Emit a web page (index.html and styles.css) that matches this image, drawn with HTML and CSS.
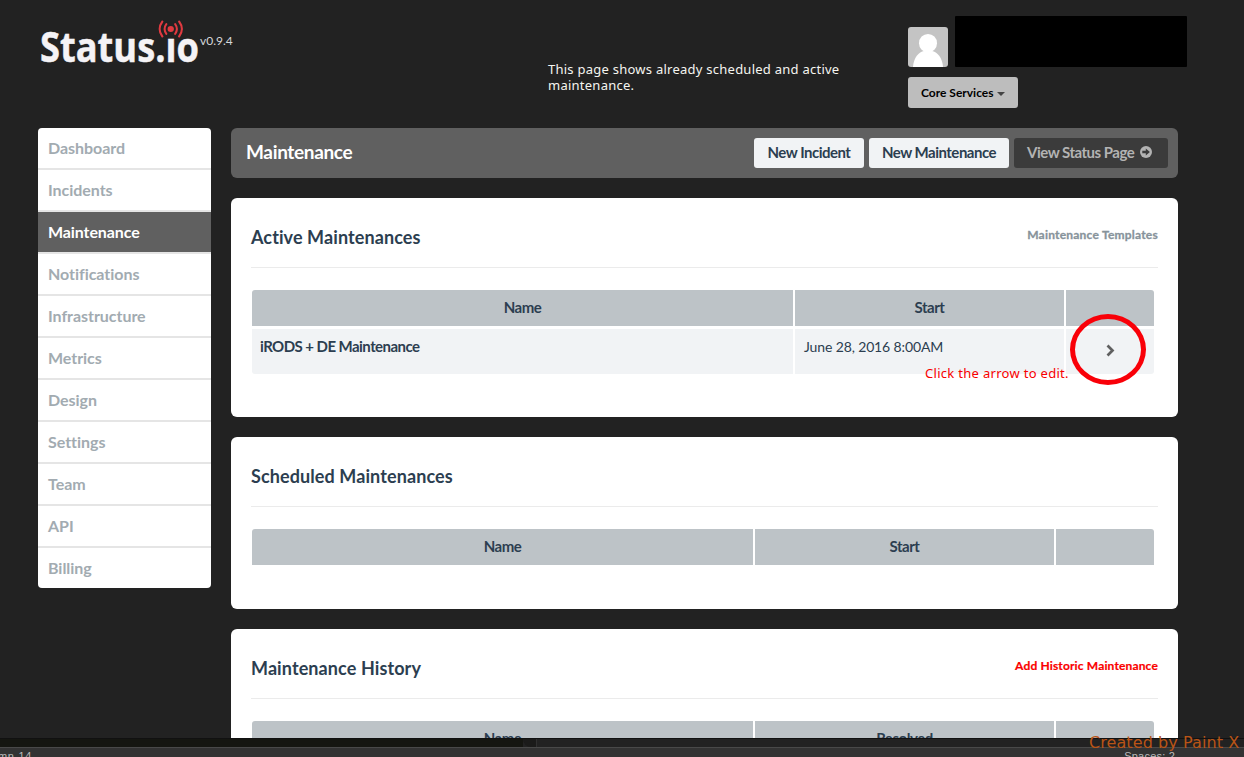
FILE: index.html
```html
<!DOCTYPE html>
<html lang="en">
<head>
<meta charset="utf-8">
<title>Status.io - Maintenance</title>
<link rel="stylesheet" href="styles.css">
</head>
<body>
<div class="screen">
  <header class="top">
    <div class="brand">
      <span class="logo">Status.<span class="logo-i">&#305;<svg class="signal" viewBox="0 0 26 18" preserveAspectRatio="none" fill="none" stroke="#e03a40" stroke-width="2.100" stroke-linecap="round"><ellipse cx="13" cy="9" rx="3.300" ry="2.900" fill="#e03a40" stroke="none"/><path d="M8.400 4.200Q4.800 9 8.400 13.800M17.600 4.200Q21.200 9 17.600 13.800M4.300 1.500Q-1.500 9 4.300 16.500M21.700 1.500Q27.500 9 21.700 16.500"/></svg></span>o</span>
      <span class="version">v0.9.4</span>
    </div>
    <p class="caption">This page shows already scheduled and active<br>maintenance.</p>
    <div class="account">
      <div class="user">
        <svg class="avatar" viewBox="0 0 40 40"><rect width="40" height="40" fill="#c4c4c4"/><ellipse cx="20" cy="16.2" rx="9" ry="9.3" fill="#fff"/><path d="M5 40C5.5 31 11 24.5 16 24h8c5 .5 10.500 7 11 16z" fill="#fff"/></svg>
        <div class="redacted"></div>
      </div>
      <button class="services"><span class="services-label">Core Services</span><span class="caret"></span></button>
    </div>
  </header>

  <div class="body">
    <nav class="menu">
      <a>Dashboard</a><a>Incidents</a><a class="current">Maintenance</a><a>Notifications</a><a>Infrastructure</a><a>Metrics</a><a>Design</a><a>Settings</a><a>Team</a><a>API</a><a>Billing</a>
    </nav>
    <main class="content">
      <div class="titlebar">
        <h1>Maintenance</h1>
        <button class="btn incident">New Incident</button>
        <button class="btn maint">New Maintenance</button>
        <button class="btn view"><span>View Status Page</span><svg class="go" viewBox="0 0 12 12"><circle cx="6" cy="6" r="6" fill="#b3b3b3"/><path d="M2.300 4.700h3.500V2.500L9.900 6 5.800 9.500V7.300H2.300z" fill="#3b3b3b"/></svg></button>
      </div>

      <section class="card active">
        <div class="card-head"><h2 class="h-active">Active Maintenances</h2><a class="templates">Maintenance Templates</a></div>
        <div class="grid grid-active">
          <div class="th">Name</div><div class="th">Start</div><div class="th"></div>
          <div class="td name">iRODS + DE Maintenance</div><div class="td date">June 28, 2016 8:00AM<span class="note">Click the arrow to edit.</span></div>
          <div class="td action"><svg class="chevron" viewBox="0 0 9 13"><path d="M1.500 1.500L6.500 6.500L1.500 11.500" fill="none" stroke="#606060" stroke-width="2.700"/></svg><span class="ring"></span></div>
        </div>
      </section>

      <section class="card scheduled">
        <div class="card-head"><h2 class="h-scheduled">Scheduled Maintenances</h2></div>
        <div class="grid"><div class="th">Name</div><div class="th">Start</div><div class="th"></div></div>
      </section>

      <section class="card history">
        <div class="card-head"><h2 class="h-history">Maintenance History</h2><a class="historic">Add Historic Maintenance</a></div>
        <div class="grid"><div class="th">Name</div><div class="th">Resolved</div><div class="th"></div></div>
      </section>
    </main>
  </div>

  <footer class="editor">
    <div class="tabs"><span class="tab-dark"></span><span class="tab-knob"></span></div>
    <div class="statusbar"><span class="column">mn 14</span><span class="spaces">Spaces: 2</span></div>
    <span class="watermark">Created by Paint X</span>
  </footer>
</div>
</body>
</html>
```
FILE: styles.css
```css
* { box-sizing: border-box; }
body { margin: 0; background: #222; font-family: Lato, sans-serif; font-variant-ligatures: none; color: #2c3e50; }
h1, h2, p { margin: 0; }
button { border: 0; padding: 0; font-family: inherit; }
.screen { position: relative; width: 1244px; height: 757px; overflow: hidden; background: #222; }

.top { display: flex; height: 128px; padding-left: 40px; }
.brand { display: flex; width: 508px; padding-top: 19px; }
.logo { font: 700 42px/54px "Open Sans", sans-serif; color: #f5f3f6; -webkit-text-stroke: .5px #f5f3f6; display: block; width: 160px; white-space: nowrap; transform: scaleX(.863); transform-origin: left; }
.logo-i { position: relative; }
.signal { position: absolute; left: -8px; top: 3px; width: 29px; height: 18px; }
.version { font-size: 12px; line-height: 16px; color: #d5d8da; padding-top: 14px; }
.caption { width: 360px; padding-top: 61px; font: 13px/16px "Noto Sans", sans-serif; letter-spacing: .25px; color: #f5f5f0; white-space: nowrap; }
.account { padding-top: 16px; }
.user { display: flex; gap: 7px; align-items: flex-end; height: 51px; }
.avatar { width: 40px; height: 40px; border-radius: 3px; }
.redacted { width: 232px; height: 51px; background: #000; border-radius: 1px; }
.services { display: flex; align-items: center; gap: 3px; width: 110px; height: 31px; margin-top: 10px; padding-left: 13px; border-radius: 3px; background: #bdbdbd; color: #000; font-size: 12px; font-weight: 700; }
.caret { border: 4px solid transparent; border-top-color: #444; border-bottom: 0; margin-top: 2px; }

.body { display: flex; gap: 20px; padding-left: 38px; align-items: flex-start; }
.menu { width: 173px; border-radius: 4px; overflow: hidden; background: #fff; }
.menu a { display: block; height: 42px; padding-left: 10px; border-bottom: 2px solid #e5e5e5; font-size: 16px; line-height: 39px; font-weight: 700; letter-spacing: -.04px; color: #a2abb1; }
.menu a:last-child { height: 40px; border-bottom: 0; }
.menu .current { background: #606060; color: #fff; letter-spacing: -.1px; }
.content { width: 947px; }
.titlebar { display: flex; align-items: center; gap: 5px; height: 50px; padding: 0 10px 0 15px; margin-bottom: 20px; border-radius: 6px; background: #606060; }
h1 { flex: 1; font-size: 19px; line-height: 24px; letter-spacing: -.35px; padding-bottom: 2px; color: #fff; }
.btn { height: 30px; padding-bottom: 2px; border-radius: 3px; background: #f1f3f5; color: #2c3e50; font-size: 15px; line-height: 28px; font-weight: 700; letter-spacing: -.5px; white-space: nowrap; }
.incident { width: 110px; }
.maint { width: 140px; }
.view { display: flex; align-items: center; gap: 6px; width: 154px; padding-left: 13px; letter-spacing: -.5px; background: #3b3b3b; color: #b3b3b3; }
.go { width: 12px; height: 12px; }

.card { padding: 20px 20px 0; margin-bottom: 20px; border-radius: 6px; background: #fff; }
.active { height: 219px; }
.scheduled { height: 172px; }
.history { height: 172px; margin-bottom: 0; }
.card-head { display: flex; justify-content: space-between; height: 50px; border-bottom: 1px solid #ebebeb; }
h2 { font-size: 18px; line-height: 38px; font-weight: 700; letter-spacing: .1px; }
.templates, .historic { font-size: 12px; line-height: 33px; font-weight: 700; letter-spacing: .15px; }
.templates { color: #87939b; letter-spacing: .22px; -webkit-text-stroke: .3px #87939b; }
.historic { color: #fa0000; -webkit-text-stroke: .2px #fa0000; }
.grid { display: grid; grid-template-columns: 501px 299px 98px; gap: 3px 2px; margin: 22px 0 0 1px; }
.grid-active { grid-template-columns: 541px 269px 88px; }
.th { height: 36px; background: #bdc3c7; text-align: center; font-size: 15px; line-height: 35px; font-weight: 700; letter-spacing: -.45px; }
.th:first-child { border-top-left-radius: 3px; }
.th:nth-child(3) { border-top-right-radius: 3px; }
.td { height: 45px; background: #f1f3f5; font-size: 14px; line-height: 36px; padding-left: 8px; }
.name { font-size: 15px; line-height: 34px; font-weight: 700; letter-spacing: -.55px; border-bottom-left-radius: 3px; }
.date { position: relative; padding-left: 9px; letter-spacing: -.13px; }
.note { position: absolute; left: 130px; top: 35px; font: 13px/18px "Noto Sans", sans-serif; letter-spacing: .3px; color: #f80000; white-space: nowrap; z-index: 2; }
.action { position: relative; padding: 15px 0 0 40px; border-bottom-right-radius: 3px; line-height: 0; }
.chevron { width: 9px; height: 13px; }
.ring { position: absolute; left: 4px; top: -15px; width: 76px; height: 71px; border: 5px solid #f90008; border-radius: 50%; }

.editor { position: absolute; left: 0; top: 738px; width: 1244px; height: 19px; background: #222; }
.tabs { display: flex; align-items: flex-start; height: 9px; border-top: 1px solid #111; }
.tab-dark { width: 523px; height: 8px; background: #151611; }
.tab-knob { width: 14px; height: 8px; background: #1b1b1a; border-right: 1px solid #303030; border-radius: 0 0 0 8px; }
.statusbar { display: flex; justify-content: space-between; height: 10px; padding-right: 69px; border-top: 1px solid #494949; background: #333; overflow: hidden; font: 11px/17px "Liberation Sans", sans-serif; color: #bbb; }
.column { margin-left: -2px; letter-spacing: .7px; }
.spaces { letter-spacing: .2px; }
.watermark { position: absolute; left: 1089px; top: -5px; font: 16px/20px "DejaVu Sans", sans-serif; letter-spacing: .08px; color: #b95416; white-space: nowrap; }
```
